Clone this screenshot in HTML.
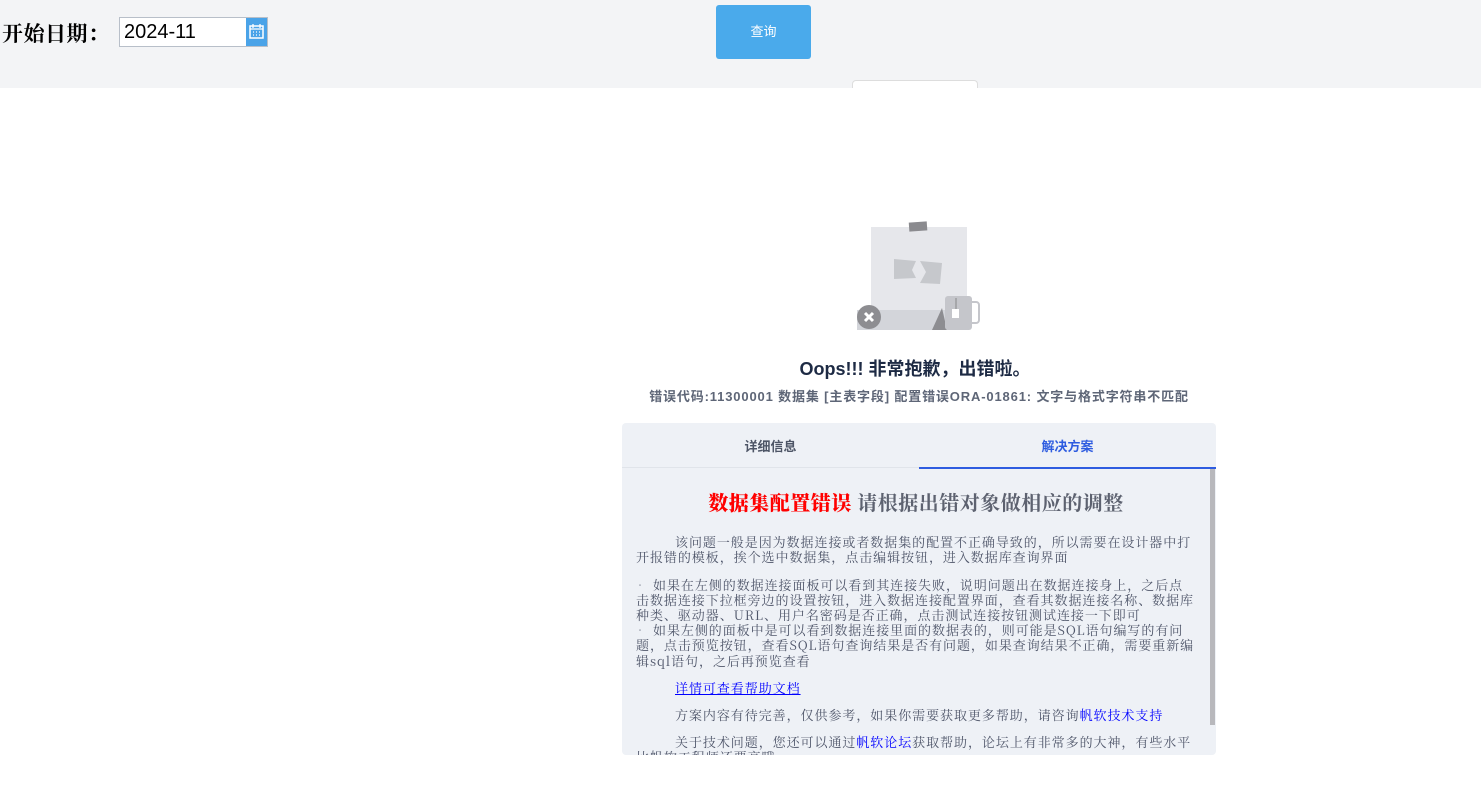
<!DOCTYPE html>
<html><head><meta charset="utf-8"><style>
*{margin:0;padding:0;box-sizing:border-box}
body{width:1481px;height:812px;overflow:hidden;background:#fff;font-family:"Liberation Sans","Noto Sans CJK SC",sans-serif;position:relative}
.top{position:absolute;left:0;top:0;width:1481px;height:88px;background:#f3f4f6}
.lbl{position:absolute;left:2px;top:18px;font-family:"Liberation Serif","Noto Serif CJK SC",serif;font-size:21px;letter-spacing:0.5px;font-weight:bold;color:#000}
.inp{position:absolute;left:119px;top:17px;width:149px;height:30px;border:1px solid #b8bfc9;background:#fff}
.inp span{position:absolute;left:4px;top:3px;font-size:20px;color:#000}
.cal{position:absolute;right:0;top:0;width:21px;height:28px;background:#4aa3e8}
.btn{position:absolute;left:716px;top:5px;width:95px;height:54px;background:#4aaaeb;border-radius:3px;color:#fff;font-size:13px;text-align:center;line-height:54px}
.tri{position:absolute;left:852px;top:80px;width:126px;height:8px;border:1px solid #ddd;border-bottom:none;border-radius:4px 4px 0 0;background:#fff}
.h1{position:absolute;left:0;width:1830px;top:355px;text-align:center;font-size:18px;font-weight:bold;color:#1d2a44}
.code{position:absolute;left:0;width:1838px;top:386px;text-align:center;font-size:13px;letter-spacing:0.85px;font-weight:bold;color:#5e6677}
.panel{position:absolute;left:622px;top:423px;width:594px;height:332px;background:#eef1f6;border-radius:4px;overflow:hidden}
.tabs{height:45px;border-bottom:1px solid #e0e4ea;position:relative;font-size:13px;font-weight:bold}
.t1{position:absolute;left:0;width:297px;text-align:center;top:13px;color:#4d5566}
.t2{position:absolute;left:297px;width:297px;text-align:center;top:13px;color:#2e5ce0}
.ul{position:absolute;left:297px;width:297px;bottom:-2px;height:2px;background:#2e5ce0}
.sb{position:absolute;left:588px;top:46px;width:5px;height:256px;background:#b8b8bc}
.content{position:absolute;left:14px;top:46px;width:560px;font-family:"Noto Serif CJK SC",serif;font-size:13px;letter-spacing:0.95px;line-height:15.2px;color:#4f566a}
.ht{text-align:center;font-family:"Liberation Serif","Noto Serif CJK SC",serif;font-size:20px;letter-spacing:0.5px;font-weight:bold;color:#5d6270;margin-top:28px;margin-bottom:22px}
.ht b{color:#f00}
p{text-indent:39px;margin-bottom:12px}
ul{list-style:none;margin-bottom:12px}
li{position:relative}
li:before{content:"•";position:absolute;left:-1px;font-size:10px}
li span{padding-left:17px}
a{color:#00f;text-decoration:underline}
.bl{color:#00f}
</style></head><body>
<div class="top">
<div class="lbl">开始日期：</div>
<div class="inp"><span>2024-11</span><div class="cal"><svg width="21" height="28" viewBox="0 0 21 28"><rect x="4" y="8" width="13" height="12" fill="none" stroke="#fff" stroke-width="1.5"/><path d="M4 11h13M7 6v4M14 6v4M7 14h1M10 14h1M13 14h1M7 17h1M10 17h1M13 17h1" stroke="#fff" stroke-width="1.3"/></svg></div></div>
<div class="btn">查询</div>
</div>
<div class="tri"></div>
<svg style="position:absolute;left:854px;top:220px" width="130" height="115" viewBox="0 0 130 115">
<rect x="17" y="7" width="96" height="85" fill="#e6e7eb"/>
<rect x="55" y="2" width="18" height="9" fill="#8b8b8f" transform="rotate(-4 64 6)"/>
<path d="M40 39l22 2-4 9 4 8-22 1z" fill="#c6c8cc"/><path d="M66 41l22 2-2 21-20-1 6-11z" fill="#c6c8cc"/>
<rect x="3" y="90" width="110" height="20" fill="#d3d5da"/>
<circle cx="15" cy="97" r="12" fill="#8d8d91"/><path d="M11 93l8 8M19 93l-8 8" stroke="#fff" stroke-width="3"/>
<path d="M78 110l10-22 5 22z" fill="#8d8d91"/>
<rect x="91" y="76" width="27" height="34" rx="3" fill="#c5c6cb"/>
<path d="M118 82h4a3 3 0 0 1 3 3v15a3 3 0 0 1-3 3h-4" fill="none" stroke="#c5c6cb" stroke-width="2"/>
<path d="M102 78v12" stroke="#888" stroke-width="1"/><rect x="98" y="89" width="7" height="9" fill="#fff"/>
</svg>
<div class="h1">Oops!!! 非常抱歉，出错啦。</div>
<div class="code">错误代码:11300001 数据集 [主表字段] 配置错误ORA-01861: 文字与格式字符串不匹配</div>
<div class="panel">
<div class="tabs"><div class="t1">详细信息</div><div class="t2">解决方案</div><div class="ul"></div></div>
<div class="sb"></div>
<div class="content">
<div class="ht"><b>数据集配置错误</b> 请根据出错对象做相应的调整</div>
<p>该问题一般是因为数据连接或者数据集的配置不正确导致的，所以需要在设计器中打开报错的模板，挨个选中数据集，点击编辑按钮，进入数据库查询界面</p>
<ul><li><span>如果在左侧的数据连接面板可以看到其连接失败，说明问题出在数据连接身上，之后点<br>击数据连接下拉框旁边的设置按钮，进入数据连接配置界面，查看其数据连接名称、数据库<br>种类、驱动器、URL、用户名密码是否正确，点击测试连接按钮测试连接一下即可</span></li>
<li><span>如果左侧的面板中是可以看到数据连接里面的数据表的，则可能是SQL语句编写的有问题，点击预览按钮，查看SQL语句查询结果是否有问题，如果查询结果不正确，需要重新编辑sql语句，之后再预览查看</span></li></ul>
<p><a>详情可查看帮助文档</a></p>
<p>方案内容有待完善，仅供参考，如果你需要获取更多帮助，请咨询<span class="bl">帆软技术支持</span></p>
<p>关于技术问题，您还可以通过<span class="bl">帆软论坛</span>获取帮助，论坛上有非常多的大神，有些水平比帆软工程师还要高哦。</p>
</div>
</div>
</body></html>
